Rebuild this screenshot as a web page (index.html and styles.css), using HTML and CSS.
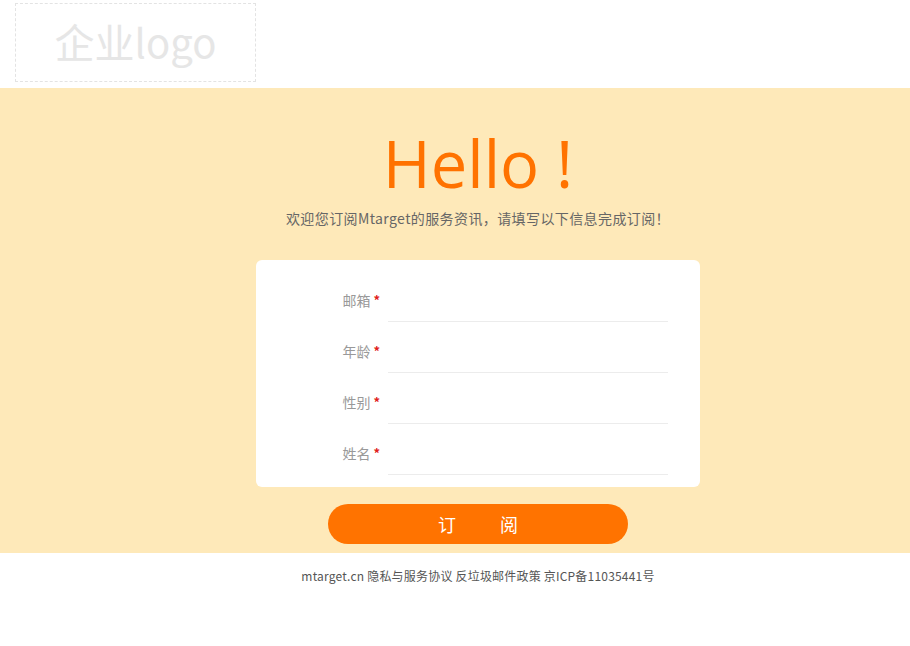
FILE: index.html
```html
<!DOCTYPE html>
<html lang="zh-CN">
<head>
<meta charset="utf-8">
<title>订阅</title>
<link rel="stylesheet" href="styles.css">
</head>
<body>
<header class="header">
  <div class="logo">企业logo</div>
</header>
<main class="hero">
  <h1 class="title">Hello !</h1>
  <p class="subtitle">欢迎您订阅Mtarget的服务资讯，请填写以下信息完成订阅！</p>
  <form class="card">
    <div class="row"><label class="label">邮箱<span class="req">*</span></label><input class="field" type="text"></div>
    <div class="row"><label class="label">年龄<span class="req">*</span></label><input class="field" type="text"></div>
    <div class="row"><label class="label">性别<span class="req">*</span></label><input class="field" type="text"></div>
    <div class="row"><label class="label">姓名<span class="req">*</span></label><input class="field" type="text"></div>
  </form>
  <button class="btn" type="button">订<span class="gap"></span>阅</button>
</main>
<footer class="footer">mtarget.cn 隐私与服务协议 反垃圾邮件政策 京ICP备11035441号</footer>
</body>
</html>
```
FILE: styles.css
```css
* { box-sizing: border-box; }
html, body { margin: 0; padding: 0; background: #fff; }
body {
  font-family: "Microsoft YaHei", "Noto Sans CJK SC", "Noto Sans", sans-serif;
  width: 910px;
}
.header {
  height: 88px;
  padding: 3px 0 0 15px;
}
.logo {
  width: 241px;
  height: 79px;
  border: 1px dashed #e3e3e3;
  color: #e6e6e6;
  font-size: 40px;
  line-height: 74px;
  text-align: center;
  font-family: "Noto Sans CJK SC", sans-serif;
}
.hero {
  background: #fee9b9;
  height: 465px;
  padding: 31px 0 0 46px;
  display: flex;
  flex-direction: column;
  align-items: center;
}
.title {
  margin: 0;
  font-weight: normal;
  font-size: 65px;
  line-height: 88px;
  color: #ff7200;
  font-family: "Open Sans", "Noto Sans", sans-serif;
}
.subtitle {
  margin: 1px 0 0;
  font-size: 14px;
  line-height: 20px;
  color: #666;
  letter-spacing: 0.4px;
}
.card {
  margin: 32px 0 0;
  width: 444px;
  background: #fff;
  border-radius: 6px;
  padding: 11px 0 12px;
  display: flex;
  flex-direction: column;
}
.row {
  display: flex;
  align-items: center;
  height: 51px;
}
.label {
  width: 124px;
  text-align: right;
  font-size: 14px;
  color: #999;
  padding-top: 6px;
}
.req {
  color: #e02020;
  margin-left: 3px;
  font-size: 13px;
  font-weight: bold;
  vertical-align: 1px;
}
.field {
  margin-left: 8px;
  width: 280px;
  height: 51px;
  border: none;
  border-bottom: 1px solid #ececec;
  outline: none;
  background: transparent;
  font-size: 14px;
}
.btn {
  margin-top: 17px;
  width: 300px;
  height: 40px;
  border: none;
  border-radius: 20px;
  background: #ff7300;
  color: #fff;
  font-size: 18px;
  font-family: "Noto Sans CJK SC", sans-serif;
  display: flex;
  align-items: center;
  justify-content: center;
  padding: 0;
}
.gap { display: inline-block; width: 44px; }
.footer {
  text-align: center;
  font-size: 12px;
  color: #555;
  padding: 14px 0 0 46px;
  letter-spacing: 0.2px;
}
```
